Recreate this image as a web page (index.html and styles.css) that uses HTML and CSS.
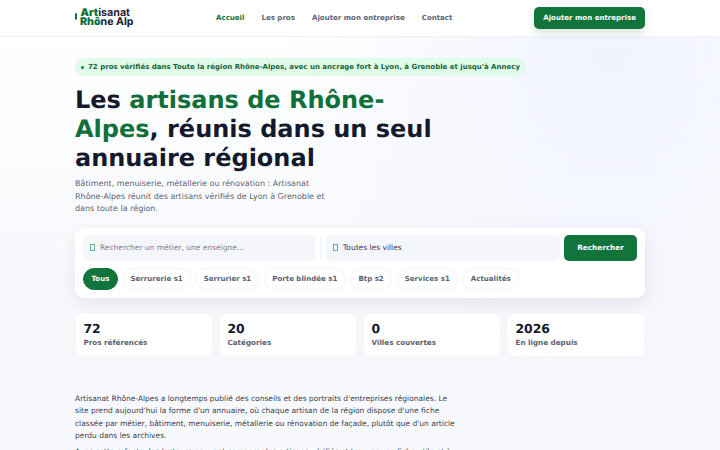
FILE: index.html
```html
<!DOCTYPE html>
<html lang="fr">
<head>
<meta charset="utf-8">
<title>Artisanat Rhône-Alpes</title>
<link rel="stylesheet" href="styles.css">
</head>
<body>
<header class="topbar">
  <div class="topbar-inner">
    <a class="logo"><span class="logo-mark"></span><span class="logo-text"><span class="logo-top"><b>Art</b>isanat</span><span class="logo-bottom"><b>Rhô</b>ne Alp</span></span></a>
    <nav class="nav">
      <a class="nav-link active">Accueil</a>
      <a class="nav-link">Les pros</a>
      <a class="nav-link">Ajouter mon entreprise</a>
      <a class="nav-link">Contact</a>
    </nav>
    <a class="cta">Ajouter mon entreprise</a>
  </div>
</header>
<main class="page">
  <p class="pill"><span class="dot"></span>72 pros vérifiés dans Toute la région Rhône-Alpes, avec un ancrage fort à Lyon, à Grenoble et jusqu'à Annecy</p>
  <h1 class="title">Les <span class="accent">artisans de Rhône-Alpes</span>, réunis dans un seul annuaire régional</h1>
  <p class="lead">Bâtiment, menuiserie, métallerie ou rénovation : Artisanat Rhône-Alpes réunit des artisans vérifiés de Lyon à Grenoble et dans toute la région.</p>
  <section class="search-card">
    <div class="search-row">
      <div class="field field-main"><span class="glyph"></span>Rechercher un métier, une enseigne...</div>
      <div class="divider"></div>
      <div class="field field-city"><span class="glyph"></span>Toutes les villes</div>
      <button class="search-btn">Rechercher</button>
    </div>
    <div class="chips">
      <span class="chip on">Tous</span>
      <span class="chip">Serrurerie s1</span>
      <span class="chip">Serrurier s1</span>
      <span class="chip">Porte blindée s1</span>
      <span class="chip">Btp s2</span>
      <span class="chip">Services s1</span>
      <span class="chip">Actualités</span>
    </div>
  </section>
  <section class="stats">
    <div class="stat"><strong>72</strong><span>Pros référencés</span></div>
    <div class="stat"><strong>20</strong><span>Catégories</span></div>
    <div class="stat"><strong>0</strong><span>Villes couvertes</span></div>
    <div class="stat"><strong>2026</strong><span>En ligne depuis</span></div>
  </section>
  <section class="prose">
    <p>Artisanat Rhône-Alpes a longtemps publié des conseils et des portraits d'entreprises régionales. Le site prend aujourd'hui la forme d'un annuaire, où chaque artisan de la région dispose d'une fiche classée par métier, bâtiment, menuiserie, métallerie ou rénovation de façade, plutôt que d'un article perdu dans les archives.</p>
    <p>Avec cette refonte, les lecteurs peuvent comparer les artisans vérifiés et trouver une fiche utile et à jour.</p>
  </section>
</main>
</body>
</html>
```
FILE: styles.css
```css
* { box-sizing: border-box; }
html, body { margin: 0; height: 450px; overflow: hidden; }
body { font-family: "DejaVu Sans", sans-serif; text-rendering: geometricPrecision; color: #141a2e; background: radial-gradient(circle at 85% 12%, #f1f3fe 0%, rgba(241,243,254,0) 45%), linear-gradient(180deg, #ffffff 8%, #f6f8fc 65%, #f7f9fc 100%); }
.topbar { height: 37px; background: #fff; border-bottom: 1px solid #f0f2f5; }
.topbar-inner { width: 570px; margin: 0 auto; height: 36px; display: flex; align-items: center; }
.logo { display: flex; align-items: center; width: 141px; }
.logo-mark { width: 2px; height: 7px; border-radius: 0 2px 2px 0; background: #0f6b3a; margin: 0 3px 4px 0; }
.logo-text { display: flex; flex-direction: column; font-family: Inter, sans-serif; font-size: 10.7px; font-weight: 700; line-height: 8.6px; color: #1f2937; }
.logo-text b { color: #11703a; }
.logo-top { margin-left: 0.5px; }
.logo-bottom { color: #141a2e; font-size: 10.6px; }
.nav { display: flex; gap: 17px; padding-bottom: 1px; }
.nav-link { font-size: 7.05px; font-weight: 700; color: #5b6472; }
.nav-link.active { color: #11703a; }
.cta { margin-left: auto; background: #11743a; color: #fff; font-size: 7.05px; font-weight: 700; height: 22px; display: flex; align-items: center; padding: 0 9px 1px; border-radius: 5px; box-shadow: 0 4px 10px rgba(17,116,58,.18); }
.page { width: 570px; margin: 0 auto; padding-top: 21px; }
.pill { display: flex; width: fit-content; align-items: center; margin: 0; height: 18px; padding: 0 6px; border-radius: 9px; background: #e0fbe9; color: #166534; font-size: 7px; font-weight: 700; }
.dot { width: 3px; height: 3px; border-radius: 50%; background: #15803d; margin-right: 4px; }
.title { margin: 10px 0 0; width: 380px; line-height: 29px; font-weight: 700; font-size: 24px; }
.accent { color: #11703a; }
.lead { margin: 5px 0 0; width: 255px; font-size: 8px; line-height: 12.6px; color: #5b6472; }
.search-card { margin-top: 12px; height: 70px; padding: 7px 8px; background: #fff; border-radius: 9px; box-shadow: 0 6px 18px rgba(15,23,42,.08); }
.search-row { display: flex; }
.field { height: 26px; display: flex; align-items: center; padding: 0 7px; font-size: 7.5px; color: #7b8290; background: #f4f6fb; border-radius: 5px; }
.field-main { width: 232px; }
.divider { width: 1px; height: 26px; background: #f0f2f5; margin: 0 5px; }
.field-city { width: 234px; color: #374151; }
.glyph { width: 5px; height: 7px; border: 1px solid #6fae8b; margin-right: 5px; flex: none; }
.search-btn { border: 0; flex: 1; margin-left: 4px; background: #11743a; color: #fff; font: 700 7.3px "DejaVu Sans", sans-serif; border-radius: 5px; }
.chips { display: flex; gap: 4px; margin-top: 7px; }
.chip { height: 22px; display: flex; align-items: center; padding: 0 7.5px 1px; border: 1px solid #f2f4f7; border-radius: 11px; font-size: 7.05px; font-weight: 700; color: #5b6472; }
.chip.on { background: #11743a; color: #fff; border-color: #11743a; }
.stats { margin-top: 16px; display: grid; grid-template-columns: repeat(4, 1fr); gap: 6px; }
.stat { height: 42px; padding: 7.5px 8.5px; background: #fff; border-radius: 6px; box-shadow: 0 0 0 1px #f2f4f8; display: flex; flex-direction: column; }
.stat strong { font-size: 12.4px; line-height: 15px; }
.stat span { font-size: 7.2px; font-weight: 700; color: #5b6472; margin-top: 1.5px; }
.prose { margin-top: 37px; width: 382px; font-size: 7.5px; line-height: 12.4px; color: #374151; }
.prose p { margin: 0 0 4px; }
```
